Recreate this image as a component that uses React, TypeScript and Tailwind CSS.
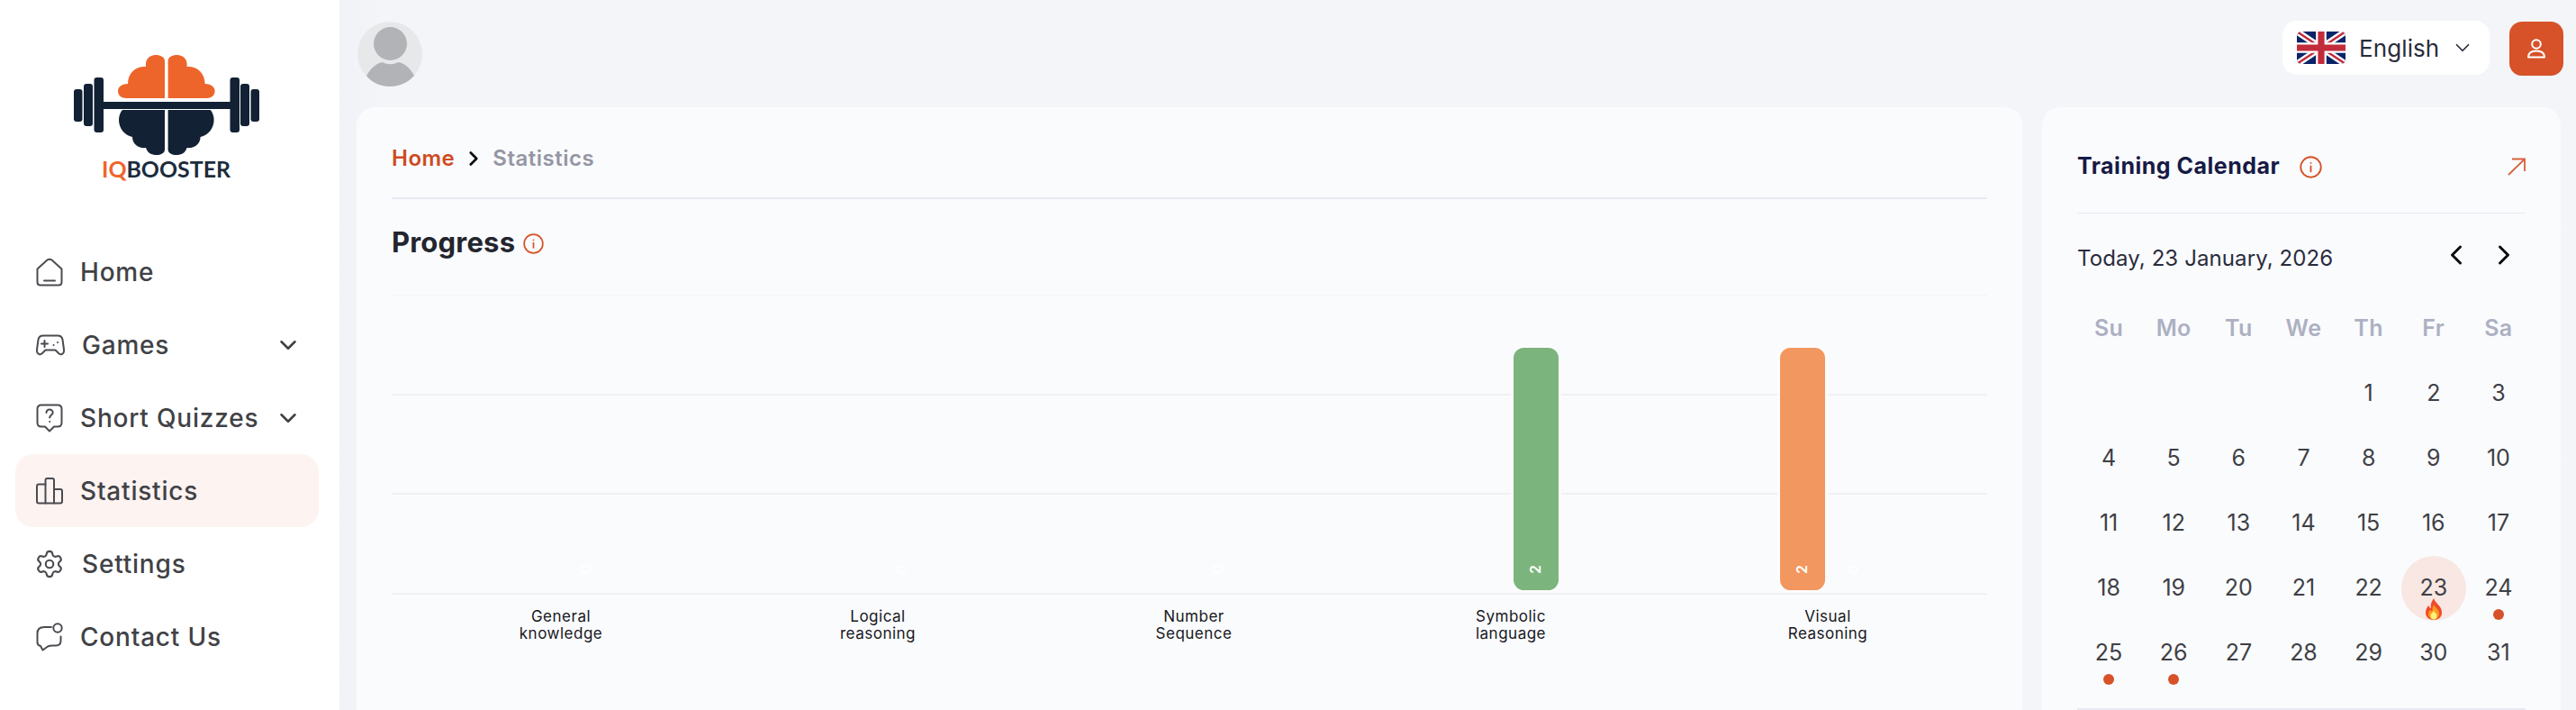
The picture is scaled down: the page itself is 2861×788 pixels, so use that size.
import { ChevronDown, ChevronLeft, ChevronRight, Settings } from "lucide-react";

const FONT = "font-['Inter','Noto_Sans',sans-serif]";

function Logo() {
  const orange = "M183 109 V68 C183 63 178 61 173 61 C166 61 161 66 162 74 C152 73 142 80 142 93 C136 93 131 96 131 101 C131 106 135 109 140 109 Z";
  const dark = "M183 122 V166 C183 170 178 172 174 172 C168 172 164 170 162 164 C154 165 147 160 147 152 C138 150 132 142 132 133 C132 128 134 124 136 122 Z";
  return (
    <svg width="377" height="261" viewBox="0 0 377 261" className="block">
      <path d={orange} fill="#ee652b" />
      <path d={orange} fill="#ee652b" transform="translate(369.6 0) scale(-1 1)" />
      <path d={dark} fill="#122133" />
      <path d={dark} fill="#122133" transform="translate(369.6 0) scale(-1 1)" />
      <rect x="114" y="113" width="142" height="8" fill="#122133" />
      <rect x="82" y="99" width="9.5" height="36" rx="3" fill="#122133" />
      <rect x="93" y="93" width="10" height="47" rx="3" fill="#122133" />
      <rect x="104.5" y="86" width="10.5" height="61" rx="3" fill="#122133" />
      <rect x="255.5" y="86" width="10.5" height="61" rx="3" fill="#122133" />
      <rect x="267" y="93" width="10" height="47" rx="3" fill="#122133" />
      <rect x="278.5" y="99" width="9.5" height="36" rx="3" fill="#122133" />
      <text x="113" y="197" fontFamily="Lato, sans-serif" fontSize="25" fontWeight="700" textLength="143" lengthAdjust="spacingAndGlyphs">
        <tspan fill="#ee652b">IQ</tspan>
        <tspan fill="#1c2c3e">BOOSTER</tspan>
      </text>
    </svg>
  );
}

const stroke = { fill: "none", stroke: "#4b4c50", strokeWidth: 2, strokeLinecap: "round" as const, strokeLinejoin: "round" as const };

function HomeIcon() {
  return (
    <svg width="30" height="32" viewBox="0 0 30 32" {...stroke}>
      <path d="M1.5 12.5 L12.5 2.5 Q15 0.8 17.5 2.5 L28.5 12.5 V27 Q28.5 30.5 25 30.5 H5 Q1.5 30.5 1.5 27 Z" />
      <path d="M9 25.5 H21" />
    </svg>
  );
}
function GameIcon() {
  return (
    <svg width="32" height="24" viewBox="0 0 32 24" {...stroke}>
      <path d="M8 1.5 H24 C27 1.5 29 3 29.5 6 L31 17 C31.5 21.5 28 23.5 25.5 21.5 L21.5 17.5 H10.5 L6.5 21.5 C4 23.5 0.5 21.5 1 17 L2.5 6 C3 3 5 1.5 8 1.5 Z" />
      <path d="M6 10.5 H13 M9.5 7 V14" />
      <path d="M19.5 12 h0.1 M24 9 h0.1" />
    </svg>
  );
}
function QuestionIcon() {
  return (
    <svg width="30" height="32" viewBox="0 0 30 32" {...stroke}>
      <path d="M6 1.5 H24 Q28.5 1.5 28.5 6 V21 Q28.5 25.5 24 25.5 H20 L15 30.5 L10 25.5 H6 Q1.5 25.5 1.5 21 V6 Q1.5 1.5 6 1.5 Z" />
      <path d="M11.5 10 C11.5 7.5 13.5 6.5 15 6.5 C17 6.5 18.7 8 18.7 10 C18.7 12.5 15.2 12.6 15.2 15.5" />
      <path d="M15.2 20 h0.1" />
    </svg>
  );
}
function BarsIcon() {
  return (
    <svg width="30" height="30" viewBox="0 0 30 30" {...stroke}>
      <path d="M10.5 28.5 H3 Q1 28.5 1 26.5 V9.5 Q1 7.5 3 7.5 H10.5" />
      <path d="M10.5 28.5 V3 Q10.5 1 12.5 1 H18 Q20 1 20 3 V28.5 Z" />
      <path d="M20 13 H27 Q29 13 29 15 V26.5 Q29 28.5 27 28.5 H20" />
    </svg>
  );
}
function ContactIcon() {
  return (
    <svg width="30" height="32" viewBox="0 0 30 32" {...stroke}>
      <path d="M17 5 H9 C4 5 1.5 8 1.5 12 V22 C1.5 24 3 25.5 5 26 L7.5 30.5 L13 26.5 Q15 25.5 18 25.5 H22 C25.5 25.5 27.5 23.5 27.5 20 V15.5" />
      <circle cx="24" cy="6" r="4.7" />
    </svg>
  );
}
function InfoIcon({ size = 23 }: { size?: number }) {
  return (
    <svg width={size} height={size} viewBox="0 0 24 24" fill="none" stroke="#d75229" strokeWidth="1.8" strokeLinecap="round">
      <circle cx="12" cy="12" r="10.8" />
      <path d="M12 11 V16.5" />
      <path d="M12 7.6 h0.05" />
    </svg>
  );
}
function Flag() {
  return (
    <svg width="54" height="36" viewBox="0 0 60 40" className="rounded-[5px]">
      <rect width="60" height="40" fill="#0a2468" />
      <path d="M0 0 L60 40 M60 0 L0 40" stroke="#fff" strokeWidth="8" />
      <path d="M0 0 L60 40 M60 0 L0 40" stroke="#c22b3a" strokeWidth="2.6" />
      <path d="M30 0 V40 M0 20 H60" stroke="#fff" strokeWidth="13" />
      <path d="M30 0 V40 M0 20 H60" stroke="#c22b3a" strokeWidth="8" />
    </svg>
  );
}
function Avatar() {
  return (
    <svg width="72" height="72" viewBox="0 0 72 72">
      <circle cx="36" cy="36" r="36" fill="#e7e8ea" />
      <circle cx="36.5" cy="24.5" r="18.5" fill="#b2b3b7" />
      <path d="M10 60 C16 50 22 46 28 45 C33 48 40 48 45 45 C52 46 58 51 63 60 C56 68 46 72 36 72 C26 72 16 68 10 60 Z" fill="#b2b3b7" />
    </svg>
  );
}
function UserIcon() {
  return (
    <svg width="22" height="24" viewBox="0 0 22 24" fill="none" stroke="#fff" strokeWidth="2" strokeLinejoin="round">
      <circle cx="11" cy="7" r="4.8" />
      <path d="M2 21.5 C2 16.5 6 14.5 11 14.5 C16 14.5 20 16.5 20 21.5 Z" />
    </svg>
  );
}
function Flame() {
  return (
    <svg width="20" height="24" viewBox="0 0 20 24">
      <path d="M10 0 C11 5 19 8 19 16 C19 21 15 24 10 24 C5 24 1 21 1 16 C1 12 3 10 4 8 C5 10 6 11 7 11 C6 7 8 3 10 0 Z" fill="#f04a2a" />
      <path d="M10 7 C11 10 16 12 16 17 C16 21 13 23.5 10 23.5 C7 23.5 4 21 4 17 C4 15 5 14 6 13 C7 14 8 14 8.5 14 C8 12 9 9 10 7 Z" fill="#fb9a1e" />
      <path d="M10 14 C11 16 13.5 17 13.5 19.5 C13.5 22 12 23.5 10 23.5 C8 23.5 6.5 22 6.5 19.5 C6.5 17 9 16 10 14 Z" fill="#fff27a" />
    </svg>
  );
}

const nav = [
  { label: "Home", icon: <HomeIcon />, text: "ml-[17px]" },
  { label: "Games", icon: <GameIcon />, chev: true, text: "ml-[19px]" },
  { label: "Short Quizzes", icon: <QuestionIcon />, chev: true, text: "ml-[17px]" },
  { label: "Statistics", icon: <BarsIcon />, active: true, text: "ml-[17px]" },
  { label: "Settings", icon: <Settings size={34} strokeWidth={1.5} color="#4b4c50" className="-ml-[2px]" />, text: "ml-[19px]" },
  { label: "Contact Us", icon: <ContactIcon />, text: "ml-[17px]" },
];

function Chart() {
  const labels: [number, string, string][] = [
    [188, "General", "knowledge"],
    [540, "Logical", "reasoning"],
    [891, "Number", "Sequence"],
    [1243, "Symbolic", "language"],
    [1595, "Visual", "Reasoning"],
  ];
  return (
    <svg width="1772" height="400" viewBox="0 0 1772 400" className="block" fontFamily="Inter, sans-serif">
      <path d="M0 8 H1772" stroke="#f6f7f9" strokeWidth="2" />
      {[118, 228, 339].map((y) => (
        <path key={y} d={`M0 ${y} H1772`} stroke="#f0f1f5" strokeWidth="2" />
      ))}
      <rect x="1244.5" y="64.5" width="53" height="272" rx="13" fill="#7cb47d" stroke="#fcfcfe" strokeWidth="3" />
      <rect x="1540.5" y="64.5" width="53" height="272" rx="13" fill="#f2975f" stroke="#fcfcfe" strokeWidth="3" />
      <text transform="translate(1270 312) rotate(-90)" fill="#fff" fontSize="16" fontWeight="600" textAnchor="middle" dominantBaseline="central">2</text>
      <text transform="translate(1566 312) rotate(-90)" fill="#fff" fontSize="16" fontWeight="600" textAnchor="middle" dominantBaseline="central">2</text>
      {[215, 566, 917, 1623].map((x) => (
        <text key={x} transform={`translate(${x} 312) rotate(-90)`} fill="#fff" fontSize="16" fontWeight="600" textAnchor="middle" dominantBaseline="central">0</text>
      ))}
      {labels.map(([x, a, b]) => (
        <text key={a} textAnchor="middle" fontSize="17" letterSpacing="0.5" fill="#17181c">
          <tspan x={x} y="370">{a}</tspan>
          <tspan x={x} y="389">{b}</tspan>
        </text>
      ))}
    </svg>
  );
}

const weeks: (number | null)[] = [null, null, null, null, 1, 2, 3];
for (let i = 4; i <= 31; i++) weeks.push(i);

export default function App() {
  return (
    <div className={`flex h-[788px] w-[2861px] overflow-hidden bg-[#f4f5f9] ${FONT}`}>
      <aside className="h-full w-[377px] shrink-0 bg-white">
        <Logo />
        <nav className="flex flex-col">
          {nav.map((n) => (
            <div
              key={n.label}
              className={`ml-[17px] flex h-[81px] w-[337px] items-center rounded-[20px] pl-[23px] pr-[19px] ${n.active ? "bg-[#fdf3f1]" : ""}`}
            >
              <span className="flex w-[32px] shrink-0 items-center">{n.icon}</span>
              <span className={`${n.text} flex-1 text-[28px] font-medium tracking-[0.8px] text-[#414246]`}>{n.label}</span>
              {n.chev && <ChevronDown size={30} strokeWidth={2} color="#3f4045" />}
            </div>
          ))}
        </nav>
      </aside>

      <main className="flex min-w-0 flex-1 flex-col bg-gradient-to-r from-[#f0f2f7] to-[#f4f5f9] to-[2%]">
        <header className="flex h-[119px] shrink-0 items-start pl-[20px] pr-[14px]">
          <div className="mt-[24px]">
            <Avatar />
          </div>
          <div className="ml-auto mt-[23px] flex h-[60px] w-[230px] items-center rounded-[16px] bg-white pl-[16px]">
            <Flag />
            <span className="ml-[15px] text-[26px] tracking-[0.1px] text-[#2a2c3c]">English</span>
            <ChevronDown size={26} strokeWidth={1.6} color="#2a2c3c" className="ml-[13px]" />
          </div>
          <div className="ml-[22px] mt-[24px] flex h-[60px] w-[60px] items-center justify-center rounded-[14px] bg-[#d75229]">
            <UserIcon />
          </div>
        </header>

        <div className="flex min-h-0 flex-1 gap-[22px] pl-[19px]">
          <section className="h-[700px] w-[1850px] shrink-0 rounded-t-[20px] bg-[#fafbfd] px-[39px] pt-[39px]">
            <div className="flex h-[36px] items-center text-[24px] font-semibold tracking-[0.5px]">
              <span className="text-[#cf4a22]">Home</span>
              <ChevronRight size={26} strokeWidth={2.5} color="#0c0c10" className="mx-[8px]" />
              <span className="text-[#9596a3]">Statistics</span>
            </div>
            <div className="mt-[25px] h-[2px] bg-[#e8e9f2]" />
            <div className="mt-[30px] flex h-[36px] items-center">
              <h1 className="text-[31px] font-bold tracking-[0.2px] text-[#23252e]">Progress</h1>
              <span className="ml-[9px] mt-[3px] flex">
                <InfoIcon />
              </span>
            </div>
            <div className="mt-[33px]">
              <Chart />
            </div>
          </section>

          <section className="h-[700px] w-[576px] shrink-0 rounded-t-[20px] bg-[#fafbfd] px-[39px] pt-[39px]">
            <div className="flex h-[54px] items-center">
              <h2 className="text-[25px] font-bold tracking-[0.5px] text-[#171a45]">Training Calendar</h2>
              <span className="ml-[22px] flex">
                <InfoIcon size={25} />
              </span>
              <svg className="ml-auto" width="20" height="20" viewBox="0 0 20 20" fill="none" stroke="#d9603a" strokeWidth="1.8">
                <path d="M1 19 L19 1.5 M5 1.5 H19 V15" />
              </svg>
            </div>
            <div className="mt-[24px] h-px bg-[#e8e9f2]" />
            <div className="flex h-[92px] items-center">
              <span className="mt-[8px] text-[24px] tracking-[0.1px] text-[#2a2c3c]">Today, 23 January, 2026</span>
              <ChevronLeft size={36} strokeWidth={2} color="#0c0c10" className="ml-auto" />
              <ChevronRight size={36} strokeWidth={2} color="#0c0c10" className="ml-[17px] mr-[6px]" />
            </div>
            <div className="-ml-[1px] grid w-[505px] grid-cols-7">
              {["Su", "Mo", "Tu", "We", "Th", "Fr", "Sa"].map((d) => (
                <div key={d} className="flex h-[72px] items-center justify-center text-[25px] font-semibold tracking-[0.4px] text-[#adb0c2]">{d}</div>
              ))}
              {weeks.map((d, i) => (
                <div key={i} className="relative flex h-[72px] items-center justify-center text-[25px] text-[#3f4045]">
                  {d === 23 && <span className="absolute inset-0 rounded-full bg-[#f8e7e2]" />}
                  {d !== null && <span className="relative">{d}</span>}
                  {d === 23 && (
                    <span className="absolute bottom-[1px] left-1/2 flex -translate-x-1/2">
                      <Flame />
                    </span>
                  )}
                  {(d === 24 || d === 25 || d === 26) && (
                    <span className="absolute bottom-[1px] left-1/2 h-[12px] w-[12px] -translate-x-1/2 rounded-full bg-[#d75229]" />
                  )}
                </div>
              ))}
            </div>
            <div className="mt-[25px] h-[2px] bg-[#e8e9f2]" />
          </section>
        </div>
      </main>
    </div>
  );
}
